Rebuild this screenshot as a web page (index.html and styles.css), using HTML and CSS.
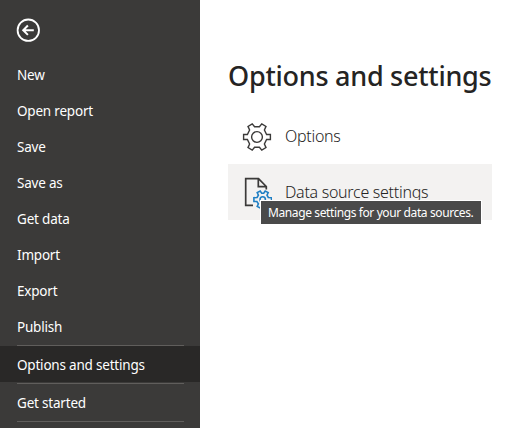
FILE: index.html
```html
<!DOCTYPE html>
<html lang="en">
<head>
<meta charset="utf-8">
<title>Options and settings</title>
<link rel="stylesheet" href="styles.css">
</head>
<body>
<nav class="sidebar">
  <button class="back" aria-label="Back">
    <svg width="24" height="24" viewBox="0 0 24 24" fill="none" stroke="#fff"><circle cx="12.3" cy="12.2" r="10.7" stroke-width="1.8"/><path d="M17.8 12.2H7.5M11.9 7.5 7.2 12.2l4.7 4.7" stroke-width="2"/></svg>
  </button>
  <a class="item">New</a>
  <a class="item">Open report</a>
  <a class="item">Save</a>
  <a class="item">Save as</a>
  <a class="item">Get data</a>
  <a class="item">Import</a>
  <a class="item">Export</a>
  <a class="item">Publish</a>
  <hr>
  <a class="item selected">Options and settings</a>
  <hr>
  <a class="item">Get started</a>
  <hr>
</nav>
<main class="content">
  <h1>Options and settings</h1>
  <div class="option">
    <svg class="gear" width="30" height="30" viewBox="-15 -15 30 30" fill="none" stroke="#3b3a39" stroke-width="1.4"><path d="M-9.6-2.5H-13.4V2.5H-9.6L-7.4 7-9 10.6-4.8 13.2-2.4 10.2H2.4L4.8 13.2 9 10.6 7.4 7 9.6 2.5H13.4V-2.5H9.6L7.4-7 9-10.6 4.8-13.2 2.4-10.2H-2.4L-4.8-13.2-9-10.6-7.4-7Z"/><circle r="5.4"/></svg>
    <span class="label">Options</span>
  </div>
  <div class="option hover">
    <svg class="doc" width="30" height="32" viewBox="0 0 30 32" fill="none"><path d="M11 28.3H3.7V1.7H16.5L24.3 9.5V12.5M16.3 1.7V9.7H24.3" stroke="#3b3a39" stroke-width="1.7"/><g transform="translate(20.7 22.5)" stroke="#1f7fc4" stroke-width="1.6"><path d="M-5.6-2-8.8-1.8V2H-5.8L-4.3 4.3-5.5 7-2.5 8.5-1 6.3H1L2.5 8.5 5.5 7 4.3 4.3 5.8 2H8.8V-1.8L5.6-2 4.3-4.3 5.5-7 2.5-8.5 1-6.3H-1L-2.5-8.5-5.5-7-4.3-4.3Z"/><circle r="2.7"/></g></svg>
    <span class="label">Data source settings</span>
    <div class="tooltip" role="tooltip">Manage settings for your data sources.</div>
  </div>
</main>
</body>
</html>
```
FILE: styles.css
```css
* { box-sizing: border-box; }
body {
  margin: 0;
  height: 428px;
  display: flex;
  overflow: hidden;
  background: #fff;
  font-family: "Noto Sans", "Open Sans", sans-serif;
  color: #252423;
}
.sidebar {
  width: 200px;
  height: 428px;
  flex: none;
  display: flex;
  flex-direction: column;
  background: #3b3a39;
  color: #fff;
}
.back {
  width: 24px;
  height: 24px;
  margin: 18px 0 14px 16px;
  padding: 0;
  border: 0;
  background: none;
}
.back svg, .option svg { display: block; }
.item {
  height: 36px;
  flex: none;
  padding-left: 17px;
  font-size: 13.5px;
  line-height: 39px;
  letter-spacing: -0.2px;
  white-space: nowrap;
}
.selected { background: #292827; }
hr {
  width: 167px;
  height: 1px;
  flex: none;
  margin: 1px 0 0 17px;
  border: 0;
  background: #605e5c;
}
.content { width: 264px; margin-left: 28px; flex: none; }
h1 {
  height: 108px;
  margin: 0;
  padding-top: 57px;
  font-size: 27px;
  line-height: 38px;
  font-weight: 500;
  letter-spacing: -0.26px;
  white-space: nowrap;
}
.option {
  position: relative;
  height: 56px;
  display: flex;
  align-items: center;
  padding: 2px 0 0 14px;
  gap: 13px;
  font-size: 16px;
  font-weight: 300;
  letter-spacing: -0.28px;
  color: #252423;
  white-space: nowrap;
}
.label { margin-bottom: 2px; }
.hover { background: #f3f2f1; }
.tooltip {
  position: absolute;
  left: 32px;
  top: 36px;
  width: 222px;
  height: 25px;
  padding-left: 7px;
  border: 1px solid #fff;
  background: #4a4a4a;
  color: #fff;
  font-size: 12px;
  font-weight: 400;
  line-height: 23px;
  letter-spacing: -0.39px;
}
```
